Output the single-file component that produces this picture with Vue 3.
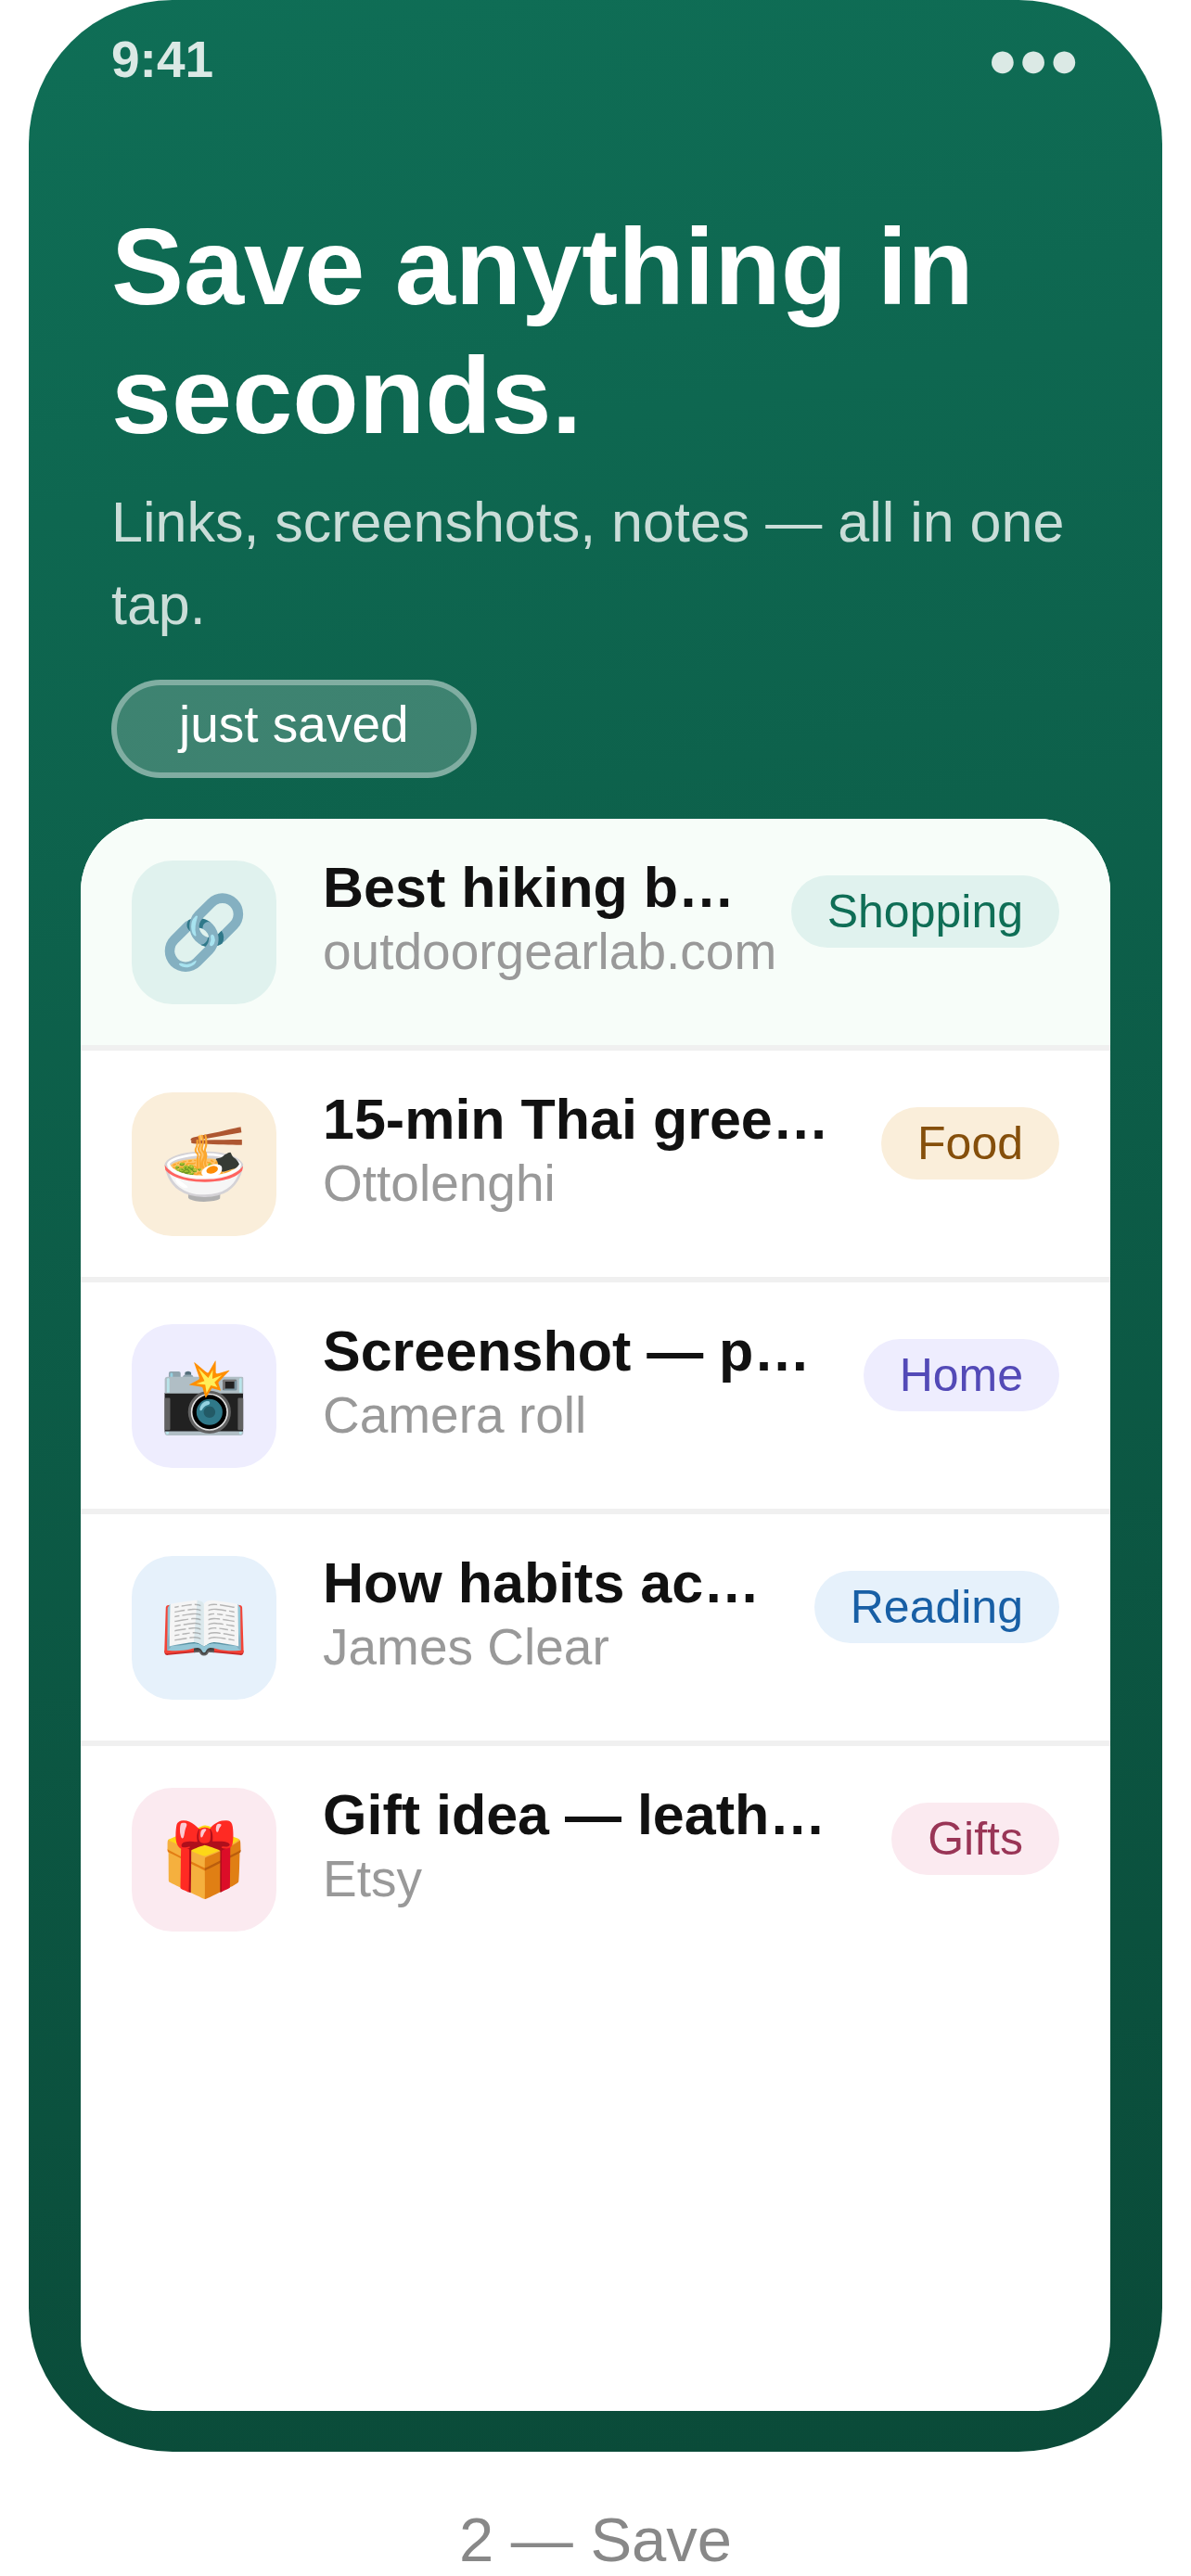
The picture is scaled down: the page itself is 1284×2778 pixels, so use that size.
<script setup>
import { ref } from 'vue'

// saved items
const items = ref([
	{ id: 1, icon: '🔗', title: 'Best hiking boots 2024', source: 'outdoorgearlab.com', tag: 'Shopping', isNew: true },
	{ id: 2, icon: '🍜', title: '15-min Thai green curry', source: 'Ottolenghi', tag: 'Food' },
	{ id: 3, icon: '📸', title: 'Screenshot — paint colours', source: 'Camera roll', tag: 'Home' },
	{ id: 4, icon: '📖', title: 'How habits actually form', source: 'James Clear', tag: 'Reading' },
	{ id: 5, icon: '🎁', title: 'Gift idea — leather wallet', source: 'Etsy', tag: 'Gifts' }
])
</script>

<template>
	<div class="page">
		<main class="phone">
			<div class="status">
				<span>9:41</span>
				<span>●●●</span>
			</div>
			<header class="intro">
				<h1>Save anything in seconds.</h1>
				<p>Links, screenshots, notes — all in one tap.</p>
				<span class="pill">just saved</span>
			</header>
			<ul class="list">
				<li
					v-for="item in items"
					:key="item.id"
					class="item"
					:class="[item.tag.toLowerCase(), { fresh: item.isNew }]">
					<span class="icon">{{ item.icon }}</span>
					<div class="text">
						<div class="title">{{ item.title }}</div>
						<div class="source">{{ item.source }}</div>
					</div>
					<span class="tag">{{ item.tag }}</span>
				</li>
			</ul>
		</main>
		<p class="caption">2 — Save</p>
	</div>
</template>

<style>
	body {
		margin: 0;
		background: #fff;
	}
</style>

<style scoped>
	.page {
		min-height: 100vh;
		box-sizing: border-box;
		padding: 0 31px;
		display: flex;
		flex-direction: column;
		font-family: 'Liberation Sans', Arial, sans-serif;
	}
	.phone {
		flex: 1;
		display: flex;
		flex-direction: column;
		padding-bottom: 44px;
		border-radius: 155px;
		background: linear-gradient(170deg, #0f6e56, #0a4a38);
	}
	.status {
		display: flex;
		justify-content: space-between;
		padding: 32px 89px 0;
		font-size: 55px;
		line-height: 64px;
		font-weight: bold;
		color: rgba(255, 255, 255, 0.85);
	}
	.intro {
		padding: 122px 89px 44px;
		display: flex;
		flex-direction: column;
		align-items: flex-start;
	}
	.intro h1 {
		margin: 0 0 23px;
		font-size: 117px;
		line-height: 139px;
		color: #fff;
	}
	.intro p {
		margin: 0 0 36px;
		font-size: 61px;
		line-height: 89px;
		color: rgba(255, 255, 255, 0.78);
	}
	.pill {
		padding: 10px 67px 20px;
		border: 6px solid rgba(255, 255, 255, 0.35);
		border-radius: 55px;
		background: rgba(255, 255, 255, 0.2);
		font-size: 55px;
		line-height: 64px;
		color: #fff;
	}
	.list {
		flex: 1;
		margin: 0 56px;
		padding: 0;
		list-style: none;
		overflow: hidden;
		border-radius: 78px;
		background: #fff;
	}
	.item {
		display: flex;
		align-items: flex-start;
		gap: 50px;
		padding: 45px 55px 44px;
		border-bottom: 6px solid #f0f0f0;
	}
	.item:last-child {
		border-bottom: none;
	}
	.item.fresh {
		background: #f7fdf9;
	}
	.icon {
		flex: none;
		width: 156px;
		height: 155px;
		display: flex;
		align-items: center;
		justify-content: center;
		border-radius: 44px;
		font-size: 77px;
	}
	.text {
		flex: 1;
		min-width: 0;
		white-space: nowrap;
	}
	.title {
		padding-bottom: 7px;
		overflow: hidden;
		text-overflow: ellipsis;
		font-size: 61px;
		line-height: 58px;
		font-weight: bold;
		color: #111;
	}
	.source {
		font-size: 55px;
		line-height: 66px;
		color: #999;
	}
	.tag {
		flex: none;
		margin-top: 16px;
		padding: 10px 39px;
		border-radius: 39px;
		font-size: 50px;
		line-height: 58px;
	}
	.shopping .icon,
	.shopping .tag {
		background: #e0f2ee;
		color: #0f6e56;
	}
	.food .icon,
	.food .tag {
		background: #faeeda;
		color: #854f0b;
	}
	.home .icon,
	.home .tag {
		background: #eeedfe;
		color: #534ab7;
	}
	.reading .icon,
	.reading .tag {
		background: #e6f1fb;
		color: #185fa5;
	}
	.gifts .icon,
	.gifts .tag {
		background: #fbeaf0;
		color: #993556;
	}
	.caption {
		margin: 56px 0 0;
		font-size: 67px;
		line-height: 78px;
		text-align: center;
		color: #888;
	}
</style>
